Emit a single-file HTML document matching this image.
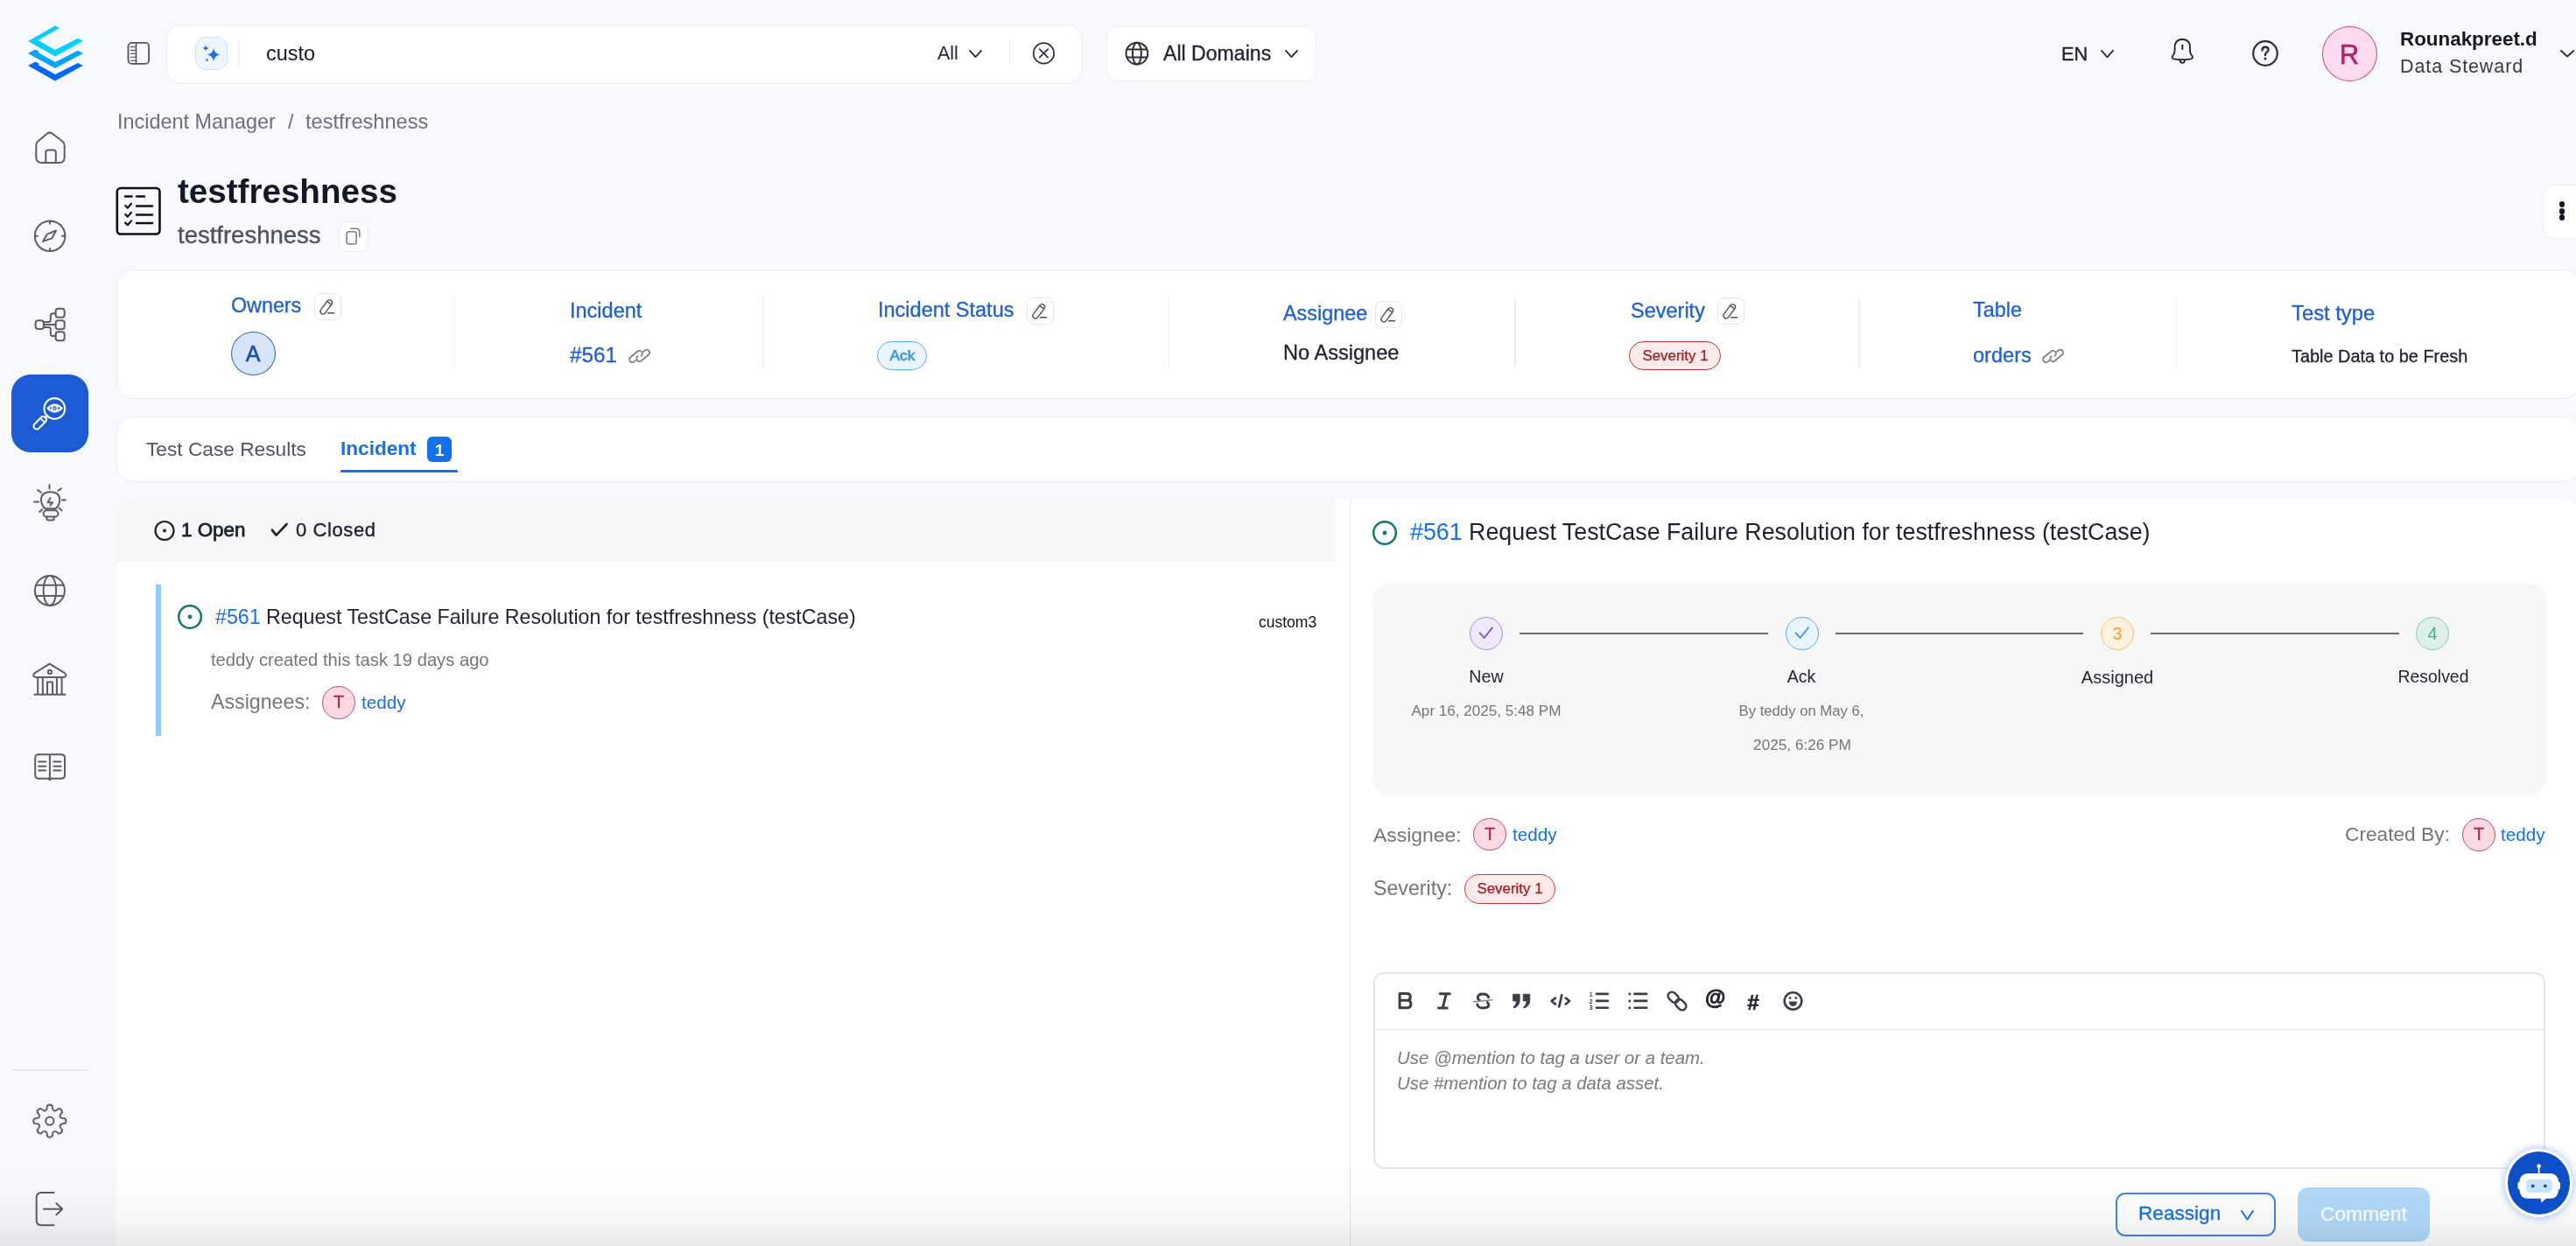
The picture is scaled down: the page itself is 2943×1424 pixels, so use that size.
<!DOCTYPE html>
<html><head><meta charset="utf-8"><style>
html,body{margin:0;padding:0;}
body{width:2943px;height:1424px;overflow:hidden;position:relative;background:#f8f9fd;font-family:"Liberation Sans",sans-serif;}
.a{position:absolute;}
.t{position:absolute;white-space:nowrap;line-height:1;will-change:transform;}
svg.a{overflow:visible;}
</style></head><body>
<svg class="a" style="left:32.00px;top:29.00px;" width="64" height="64" viewBox="0 0 64 64" fill="none"><path d="M31 0.4 L36 3 L11.5 17 L31 28 L57 14.75 L62.75 18 L31 35.4 L0 18 Z" fill="#00d2fb"/><path d="M0 32 L8.5 27.5 L13 30 L11.5 31 L31 42 L57 28.75 L62.75 32 L31 49 Z" fill="#00a4fb"/><path d="M0 46 L8.5 41.5 L13 44 L11.5 45 L31 56 L57 43 L62.75 46 L31 63.5 Z" fill="#0068fb"/></svg>
<div class="a" style="left:12.80px;top:428.00px;width:88.20px;height:89.00px;background:#1b5bd4;border-radius:22px;"></div>
<svg class="a" style="left:0;top:0" width="133" height="1424" viewBox="0 0 133 1424" fill="none"><path d="M41.3 166 Q41.3 163.2 43.4 161.5 L53.8 152.8 Q56.9 150.4 60 152.8 L71.6 161.8 Q73.7 163.6 73.7 166.5 V179.6 Q73.7 186.1 67.2 186.1 H47.8 Q41.3 186.1 41.3 179.6 Z" stroke="#585e6a" stroke-width="2.0" stroke-linecap="round" stroke-linejoin="round"/><path d="M52.3 186.1 V174.1 Q52.3 171.6 54.8 171.6 H61.3 Q63.8 171.6 63.8 174.1 V186.1" stroke="#585e6a" stroke-width="2.0" stroke-linecap="round" stroke-linejoin="round"/><circle cx="57.1" cy="269.8" r="17.3" stroke="#585e6a" stroke-width="2.0" stroke-linecap="round" stroke-linejoin="round"/><path d="M56.9 253.2 V255.8 M56.9 284 V286.7 M40.2 269.7 H42.8 M71 269.8 H73.7" stroke="#585e6a" stroke-width="2.0" stroke-linecap="round" stroke-linejoin="round"/><path d="M49 275.9 L53.8 267.7 L64 263.5 L59.4 272.4 Z" stroke="#585e6a" stroke-width="2.0" stroke-linecap="round" stroke-linejoin="round"/><rect x="40.6" y="366.2" width="9.3" height="9.7" rx="3" stroke="#585e6a" stroke-width="2.0" stroke-linecap="round" stroke-linejoin="round"/><rect x="63.6" y="352.7" width="10.1" height="10.1" rx="3" stroke="#585e6a" stroke-width="2.0" stroke-linecap="round" stroke-linejoin="round"/><rect x="63.6" y="366.2" width="10.1" height="10.1" rx="3" stroke="#585e6a" stroke-width="2.0" stroke-linecap="round" stroke-linejoin="round"/><rect x="63.6" y="379.2" width="10.1" height="10.1" rx="3" stroke="#585e6a" stroke-width="2.0" stroke-linecap="round" stroke-linejoin="round"/><path d="M49.9 371 H63.6 M49.9 368 H55.5 Q57.8 368 57.8 365.5 V360.7 Q57.8 358.2 60.3 358.2 H63.6 M49.9 373.9 H55.5 Q57.8 373.9 57.8 376.4 V381.4 Q57.8 383.9 60.3 383.9 H63.6" stroke="#585e6a" stroke-width="2.0" stroke-linecap="round" stroke-linejoin="round"/><path d="M56.5 554.2 V558.6 M43.2 560.1 L46.8 562.8 M69.9 558.4 L66.3 560.8 M39.3 573.4 H44.1 M71 571.6 H74.8 M45 585 L48.3 582.4 M67.5 580.4 L70.4 583.5" stroke="#585e6a" stroke-width="2.0" stroke-linecap="round" stroke-linejoin="round"/><path d="M51.5 581.3 Q47 577 47 571.3 Q47 562.3 57.6 562.3 Q68.2 562.3 68.2 571.3 Q68.2 577 63.7 581.3 Z" stroke="#585e6a" stroke-width="2.0" stroke-linecap="round" stroke-linejoin="round"/><rect x="49.6" y="583.3" width="16.8" height="7.3" rx="3.6" stroke="#585e6a" stroke-width="2.0" stroke-linecap="round" stroke-linejoin="round"/><path d="M53.4 590.6 V592.4 Q53.4 594.4 55.4 594.4 H59.8 Q61.8 594.4 61.8 592.4 V590.6" stroke="#585e6a" stroke-width="2.0" stroke-linecap="round" stroke-linejoin="round"/><path d="M57.4 569.2 L54.5 574.3 H60 L57.4 577.6" stroke="#585e6a" stroke-width="2.0" stroke-linecap="round" stroke-linejoin="round" stroke-width="1.8"/><circle cx="56.9" cy="674.9" r="17" stroke="#585e6a" stroke-width="2.0" stroke-linecap="round" stroke-linejoin="round"/><ellipse cx="56.9" cy="674.9" rx="7.3" ry="17" stroke="#585e6a" stroke-width="2.0" stroke-linecap="round" stroke-linejoin="round"/><path d="M41 668.7 H72.8 M41 681.1 H72.8" stroke="#585e6a" stroke-width="2.0" stroke-linecap="round" stroke-linejoin="round"/><path d="M56.7 758.6 L39.7 769.2 Q37.5 770.8 38.6 772.8 Q39.6 774.1 41.6 774.1 H72 Q74 774.1 75 772.8 Q76 770.8 73.8 769.2 Z" stroke="#585e6a" stroke-width="2.0" stroke-linecap="round" stroke-linejoin="round"/><circle cx="56.9" cy="767.9" r="2.1" stroke="#585e6a" stroke-width="2.0" stroke-linecap="round" stroke-linejoin="round" stroke-width="1.7"/><path d="M43.2 774.1 V793.5 M48.8 774.1 V793.5 M64.9 774.1 V793.5 M70.6 774.1 V793.5 M54 793.5 V779.6 H60 V793.5 M39.3 793.7 H74.6" stroke="#585e6a" stroke-width="2.0" stroke-linecap="round" stroke-linejoin="round"/><path d="M56.9 863.5 Q56.9 862.3 55 862.3 H44.2 Q40.2 862.3 40.2 866.3 V885.8 Q40.2 889.8 44.2 889.8 H56.9 M56.9 863.5 Q56.9 862.3 58.8 862.3 H70 Q74 862.3 74 866.3 V885.8 Q74 889.8 70 889.8 H56.9 M56.9 863.5 V890" stroke="#585e6a" stroke-width="2.0" stroke-linecap="round" stroke-linejoin="round"/><circle cx="56.9" cy="890.3" r="2" fill="#585e6a"/><path d="M44.1 870.6 H52.3 M44.1 875.7 H52.3 M44.1 880.6 H52.3 M61.3 870.6 H69.5 M61.3 875.7 H69.5 M61.3 880.6 H69.5" stroke="#585e6a" stroke-width="2.0" stroke-linecap="round" stroke-linejoin="round"/><path d="M51.83 1269.19 Q53.74 1269.08 53.91 1263.84 Q56.80 1261.40 59.69 1263.84 Q59.86 1269.08 61.77 1269.19 Q63.21 1270.47 67.03 1266.88 Q70.80 1267.20 71.12 1270.97 Q67.53 1274.79 68.81 1276.23 Q68.92 1278.14 74.16 1278.31 Q76.60 1281.20 74.16 1284.09 Q68.92 1284.26 68.81 1286.17 Q67.53 1287.61 71.12 1291.43 Q70.80 1295.20 67.03 1295.52 Q63.21 1291.93 61.77 1293.21 Q59.86 1293.32 59.69 1298.56 Q56.80 1301.00 53.91 1298.56 Q53.74 1293.32 51.83 1293.21 Q50.39 1291.93 46.57 1295.52 Q42.80 1295.20 42.48 1291.43 Q46.07 1287.61 44.79 1286.17 Q44.68 1284.26 39.44 1284.09 Q37.00 1281.20 39.44 1278.31 Q44.68 1278.14 44.79 1276.23 Q46.07 1274.79 42.48 1270.97 Q42.80 1267.20 46.57 1266.88 Q50.39 1270.47 51.83 1269.19 Z" stroke="#585e6a" stroke-width="2.0" stroke-linecap="round" stroke-linejoin="round"/><circle cx="56.8" cy="1281.2" r="4.6" stroke="#585e6a" stroke-width="2.0" stroke-linecap="round" stroke-linejoin="round"/><path d="M61.6 1363 H47.5 Q41.7 1363 41.7 1368.8 V1394.5 Q41.7 1400.3 47.5 1400.3 H61.6" stroke="#585e6a" stroke-width="2.0" stroke-linecap="round" stroke-linejoin="round"/><path d="M50 1381.7 H71.2 M64.4 1375.2 L71.2 1381.7 L64.4 1388.2" stroke="#585e6a" stroke-width="2.0" stroke-linecap="round" stroke-linejoin="round"/><circle cx="62.3" cy="466.9" r="11.8" stroke="#fff" stroke-width="2.1" stroke-linecap="round" stroke-linejoin="round"/><path d="M54.6 466.6 Q62.4 458.6 70.8 466.6 Q62.4 474.6 54.6 466.6 Z" stroke="#fff" stroke-width="2.1" stroke-linecap="round" stroke-linejoin="round"/><circle cx="62.5" cy="466.6" r="3.1" stroke="#fff" stroke-width="1.7"/><circle cx="62.5" cy="466.6" r="1" fill="#fff"/><path d="M51.5 477.6 L54.2 474.9" stroke="#fff" stroke-width="2.1" stroke-linecap="round" stroke-linejoin="round"/><g transform="rotate(-45 45.75 483.25)"><rect x="36.9" y="479.75" width="17.7" height="7" rx="3.5" stroke="#fff" stroke-width="2"/><path d="M49.8 479.75 V486.75" stroke="#fff" stroke-width="1.8"/></g></svg>
<div class="a" style="left:12.50px;top:1222.00px;width:88.50px;height:1.50px;background:#e8e9ee;"></div>
<svg class="a" style="left:139.00px;top:41.00px" width="39.00" height="40.00" viewBox="139.00 41.00 39.00 40.00" fill="none"><rect x="146.5" y="48.9" width="23.6" height="24" rx="4.2" stroke="#50565f" stroke-width="1.8"/><path d="M155.5 48.9 V72.9" stroke="#50565f" stroke-width="1.6"/><path d="M149.3 53.5 H154.8 M149.3 57.5 H154.8 M149.3 61.4 H154.8 M149.3 65.4 H154.8 M149.3 69.3 H154.8" stroke="#5d636d" stroke-width="1.3" stroke-linecap="round"/></svg>
<div class="a" style="left:190.00px;top:28.00px;width:1047.00px;height:67.50px;background:#fff;border:1.5px solid #e9ebf2;border-radius:18px;box-sizing:border-box;"></div>
<div class="a" style="left:222.70px;top:42.00px;width:37.30px;height:38.00px;background:#eef6ff;border:1.5px solid #c6e4fb;border-radius:12px;box-sizing:border-box;"></div>
<svg class="a" style="left:228.00px;top:49.00px;" width="26" height="26" viewBox="0 0 26 26" fill="none"><path d="M16 6 Q17 12.5 23.5 13.5 Q17 14.5 16 21 Q15 14.5 8.5 13.5 Q15 12.5 16 6 Z" fill="#1f6fe8"/><path d="M7 2.5 Q7.5 5.5 10.5 6 Q7.5 6.5 7 9.5 Q6.5 6.5 3.5 6 Q6.5 5.5 7 2.5 Z" fill="#1f6fe8"/><path d="M8.5 17.5 Q8.8 19.2 10.5 19.5 Q8.8 19.8 8.5 21.5 Q8.2 19.8 6.5 19.5 Q8.2 19.2 8.5 17.5 Z" fill="#1f6fe8"/></svg>
<div class="a" style="left:272.00px;top:44.00px;width:1.30px;height:32.00px;background:#e9ebf0;"></div>
<div class="t " style="left:304.40px;top:50.19px;font-size:23.4px;color:#101828;font-weight:400;">custo</div>
<div class="t " style="left:1070.75px;top:50.63px;font-size:21.4px;color:#1d2433;font-weight:400;">All</div>
<svg class="a" style="left:1101.00px;top:51.00px" width="27.00" height="21.00" viewBox="1101.00 51.00 27.00 21.00" fill="none"><path d="M1107.95 57.95 L1114.50 65.05 L1121.05 57.95" stroke="#2b303b" stroke-width="1.9" stroke-linecap="round" stroke-linejoin="round"/></svg>
<div class="a" style="left:1153.20px;top:44.50px;width:1.20px;height:30.50px;background:#e9ebf0;"></div>
<svg class="a" style="left:1173.00px;top:41.00px" width="39.00" height="40.00" viewBox="1173.00 41.00 39.00 40.00" fill="none"><circle cx="1192.4" cy="60.9" r="11.7" stroke="#2b303b" stroke-width="1.7"/><path d="M1187.6 56.1 L1197.2 65.7 M1197.2 56.1 L1187.6 65.7" stroke="#2b303b" stroke-width="1.7" stroke-linecap="round"/></svg>
<div class="a" style="left:1263.75px;top:30.00px;width:240.50px;height:62.50px;background:#fff;border:1.5px solid #eceef4;border-radius:14px;box-sizing:border-box;"></div>
<svg class="a" style="left:1279.00px;top:41.00px" width="40.00" height="40.00" viewBox="1279.00 41.00 40.00 40.00" fill="none"><circle cx="1298.9" cy="61.1" r="12.4" stroke="#2b303b" stroke-width="2"/><ellipse cx="1298.9" cy="61.1" rx="5" ry="12.4" stroke="#2b303b" stroke-width="2"/><path d="M1287.4 56.6 H1310.4 M1287.4 65.6 H1310.4" stroke="#2b303b" stroke-width="2"/></svg>
<div class="t " style="left:1328.75px;top:49.95px;font-size:23.1px;color:#1d2433;font-weight:400;-webkit-text-stroke:0.35px #1d2433;">All Domains</div>
<svg class="a" style="left:1461.50px;top:51.00px" width="27.00" height="21.00" viewBox="1461.50 51.00 27.00 21.00" fill="none"><path d="M1468.45 57.95 L1475.00 65.05 L1481.55 57.95" stroke="#2b303b" stroke-width="1.9" stroke-linecap="round" stroke-linejoin="round"/></svg>
<div class="t " style="left:2355.00px;top:51.05px;font-size:21.8px;color:#1d2433;font-weight:400;-webkit-text-stroke:0.35px #1d2433;">EN</div>
<svg class="a" style="left:2393.50px;top:51.00px" width="27.00" height="21.25" viewBox="2393.50 51.00 27.00 21.25" fill="none"><path d="M2400.45 57.95 L2407.00 65.30 L2413.55 57.95" stroke="#2b303b" stroke-width="1.9" stroke-linecap="round" stroke-linejoin="round"/></svg>
<svg class="a" style="left:2473.00px;top:37.00px" width="41.00" height="43.00" viewBox="2473.00 37.00 41.00 43.00" fill="none"><path d="M2493.3 45 Q2501.8 45 2502 54 V58.5 Q2502.2 61.5 2504.5 64 Q2506 66.5 2503 67.3 Q2493.3 69 2483.6 67.3 Q2480.6 66.5 2482.1 64 Q2484.4 61.5 2484.6 58.5 V54 Q2484.8 45 2493.3 45 Z" stroke="#1f242c" stroke-width="1.8" stroke-linejoin="round"/><path d="M2493.3 51.8 V56" stroke="#1f242c" stroke-width="2" stroke-linecap="round"/><path d="M2490.4 68.4 Q2490.8 71.8 2493.3 71.8 Q2495.8 71.8 2496.2 68.4" stroke="#1f242c" stroke-width="1.8"/></svg>
<svg class="a" style="left:2572.00px;top:45.00px;" width="32" height="32" viewBox="0 0 32 32" fill="none"><circle cx="16" cy="16" r="13.8" stroke="#2b303b" stroke-width="2.2"/><path d="M12.5 12.5 Q12.5 8.8 16 8.8 Q19.5 8.8 19.5 12 Q19.5 14 17.5 15 Q16 15.8 16 17.5 V18" stroke="#2b303b" stroke-width="2.4" stroke-linecap="round"/><circle cx="16" cy="22" r="1.5" fill="#2b303b"/></svg>
<div class="a" style="left:2652.75px;top:29.50px;width:63.25px;height:63.00px;background:#fddcef;border:1.5px solid #cc4a86;border-radius:50%;box-sizing:border-box;"></div>
<div class="t " style="left:2184.40px;width:1000px;text-align:center;top:46.76px;font-size:31px;color:#b8206e;font-weight:400;-webkit-text-stroke:0.6px #b8206e;">R</div>
<div class="t " style="left:2742.00px;top:33.54px;font-size:22.4px;color:#101828;font-weight:700;">Rounakpreet.d</div>
<div class="t " style="left:2742.00px;top:65.55px;font-size:21.5px;color:#333946;font-weight:400;letter-spacing:0.9px;">Data Steward</div>
<svg class="a" style="left:2919.25px;top:51.00px" width="28.25" height="20.50" viewBox="2919.25 51.00 28.25 20.50" fill="none"><path d="M2926.20 57.95 L2933.38 64.55 L2940.55 57.95" stroke="#2b303b" stroke-width="1.9" stroke-linecap="round" stroke-linejoin="round"/></svg>
<div class="t " style="left:134.00px;top:127.69px;font-size:23.4px;color:#6e6d86;font-weight:400;">Incident Manager</div>
<div class="t " style="left:329.00px;top:127.69px;font-size:23.4px;color:#6e6d86;font-weight:400;">/</div>
<div class="t " style="left:349.40px;top:128.02px;font-size:23.6px;color:#6e6d86;font-weight:400;">testfreshness</div>
<svg class="a" style="left:125.00px;top:206.00px" width="67.00" height="71.00" viewBox="125.00 206.00 67.00 71.00" fill="none"><rect x="133.8" y="215.05" width="48.65" height="52.4" rx="4" stroke="#0d1117" stroke-width="2.6"/><path d="M143 224.5 H150.5 M156 224.5 H165 M156 235.5 H174 M156 245.5 H174 M156 255 H174" stroke="#0d1117" stroke-width="2.5" stroke-linecap="round"/><path d="M143.2 235 L145.8 237.6 L150 232.8 M143.2 245 L145.8 247.6 L150 242.8 M143.2 254.6 L145.8 257.2 L150 252.4" stroke="#0d1117" stroke-width="2.2" stroke-linecap="round" stroke-linejoin="round"/></svg>
<div class="t " style="left:202.50px;top:200.33px;font-size:38.6px;color:#111827;font-weight:700;">testfreshness</div>
<div class="t " style="left:202.50px;top:255.47px;font-size:27.5px;color:#4a5262;font-weight:400;-webkit-text-stroke:0.35px #4a5262;">testfreshness</div>
<div class="a" style="left:386.50px;top:253.00px;width:34.00px;height:34.50px;background:#fff;border:1.5px solid #e9ecf5;border-radius:10px;box-sizing:border-box;"></div>
<svg class="a" style="left:388.00px;top:253.00px" width="31.00" height="34.00" viewBox="388.00 253.00 31.00 34.00" fill="none"><rect x="396" y="264.8" width="11.2" height="14.2" rx="3" stroke="#7b808a" stroke-width="1.6"/><path d="M400.8 261.3 H406.3 Q410.8 261.3 410.8 265.8 V270.6" stroke="#7b808a" stroke-width="1.6" stroke-linecap="round"/></svg>
<div class="a" style="left:2904.50px;top:210.50px;width:85.50px;height:62.00px;background:#fff;border:1.5px solid #eceef4;border-radius:14px;box-sizing:border-box;"></div>
<div class="a" style="left:2923.50px;top:230.45px;width:6.60px;height:6.60px;background:#111827;border-radius:50%;"></div>
<div class="a" style="left:2923.50px;top:237.95px;width:6.60px;height:6.60px;background:#111827;border-radius:50%;"></div>
<div class="a" style="left:2923.50px;top:245.45px;width:6.60px;height:6.60px;background:#111827;border-radius:50%;"></div>
<div class="a" style="left:133.00px;top:308.00px;width:2815.00px;height:147.50px;background:#fff;border:1.5px solid #e8ebf3;border-radius:20px;box-sizing:border-box;"></div>
<div class="a" style="left:518.75px;top:341.00px;width:1.50px;height:78.50px;background:#eceef5;"></div>
<div class="a" style="left:871.25px;top:341.00px;width:1.50px;height:78.50px;background:#eceef5;"></div>
<div class="a" style="left:1334.75px;top:341.00px;width:1.50px;height:78.50px;background:#eceef5;"></div>
<div class="a" style="left:1730.25px;top:341.00px;width:1.50px;height:78.50px;background:#eceef5;"></div>
<div class="a" style="left:2123.00px;top:341.00px;width:1.50px;height:78.50px;background:#eceef5;"></div>
<div class="a" style="left:2485.75px;top:341.00px;width:1.50px;height:78.50px;background:#eceef5;"></div>
<div class="t " style="left:264.00px;top:337.78px;font-size:23.3px;color:#1c5fd6;font-weight:400;-webkit-text-stroke:0.3px #1c5fd6;">Owners</div>
<div class="a" style="left:359.00px;top:334.50px;width:31.00px;height:31.00px;background:#fff;border:1.5px solid #e4e6ea;border-radius:7px;box-sizing:border-box;"></div>
<svg class="a" style="left:359.00px;top:334.50px;" width="31" height="31" viewBox="0 0 31 31" fill="none"><g transform="rotate(-53 13.6 16)"><rect x="4.6" y="12.9" width="18.5" height="6.2" rx="3.1" stroke="#4b515c" stroke-width="1.35"/><path d="M19.6 12.9 V19.1" stroke="#4b515c" stroke-width="1.35"/></g><path d="M15.6 22.8 H22.6" stroke="#4b515c" stroke-width="1.6" stroke-linecap="round"/></svg>
<div class="a" style="left:263.75px;top:378.75px;width:50.75px;height:50.50px;background:#d6e5fc;border:1.5px solid #2f5fb8;border-radius:50%;box-sizing:border-box;"></div>
<div class="t " style="left:-210.90px;width:1000px;text-align:center;top:391.84px;font-size:25px;color:#1d4fa8;font-weight:400;-webkit-text-stroke:0.6px #1d4fa8;">A</div>
<div class="t " style="left:651.00px;top:343.86px;font-size:23.5px;color:#1c5fd6;font-weight:400;-webkit-text-stroke:0.3px #1c5fd6;">Incident</div>
<div class="t " style="left:651.00px;top:394.43px;font-size:24.3px;color:#1c5fd6;font-weight:400;-webkit-text-stroke:0.3px #1c5fd6;">#561</div>
<svg class="a" style="left:709.00px;top:388.00px" width="42.00" height="38.00" viewBox="709.00 388.00 42.00 38.00" fill="none"><g transform="rotate(-39.4 730.6 406.9)" stroke="#828282" stroke-width="1.8" stroke-linecap="round" fill="none"><path d="M724.00 408.00 H721.80 A3.3 3.3 0 0 1 721.80 401.40 H732.40 A3.3 3.3 0 0 1 732.40 408.00"/><path d="M737.20 405.80 H739.40 A3.3 3.3 0 0 1 739.40 412.40 H728.80 A3.3 3.3 0 0 1 728.80 405.80"/></g></svg>
<div class="t " style="left:1002.50px;top:343.11px;font-size:23.5px;color:#1c5fd6;font-weight:400;-webkit-text-stroke:0.3px #1c5fd6;">Incident Status</div>
<div class="a" style="left:1173.00px;top:340.00px;width:31.00px;height:31.00px;background:#fff;border:1.5px solid #e4e6ea;border-radius:7px;box-sizing:border-box;"></div>
<svg class="a" style="left:1173.00px;top:340.00px;" width="31" height="31" viewBox="0 0 31 31" fill="none"><g transform="rotate(-53 13.6 16)"><rect x="4.6" y="12.9" width="18.5" height="6.2" rx="3.1" stroke="#4b515c" stroke-width="1.35"/><path d="M19.6 12.9 V19.1" stroke="#4b515c" stroke-width="1.35"/></g><path d="M15.6 22.8 H22.6" stroke="#4b515c" stroke-width="1.6" stroke-linecap="round"/></svg>
<div class="a" style="left:1002.00px;top:390.00px;width:57.00px;height:33.00px;background:#eaf5ff;border:1.5px solid #5aaef2;border-radius:17px;box-sizing:border-box;"></div>
<div class="t " style="left:530.50px;width:1000px;text-align:center;top:398.27px;font-size:17.4px;color:#3a97ea;font-weight:400;-webkit-text-stroke:0.7px #3a97ea;">Ack</div>
<div class="t " style="left:1466.00px;top:347.19px;font-size:23.4px;color:#1c5fd6;font-weight:400;-webkit-text-stroke:0.3px #1c5fd6;">Assignee</div>
<div class="a" style="left:1570.50px;top:344.00px;width:31.00px;height:31.00px;background:#fff;border:1.5px solid #e4e6ea;border-radius:7px;box-sizing:border-box;"></div>
<svg class="a" style="left:1570.50px;top:344.00px;" width="31" height="31" viewBox="0 0 31 31" fill="none"><g transform="rotate(-53 13.6 16)"><rect x="4.6" y="12.9" width="18.5" height="6.2" rx="3.1" stroke="#4b515c" stroke-width="1.35"/><path d="M19.6 12.9 V19.1" stroke="#4b515c" stroke-width="1.35"/></g><path d="M15.6 22.8 H22.6" stroke="#4b515c" stroke-width="1.6" stroke-linecap="round"/></svg>
<div class="t " style="left:1466.00px;top:392.02px;font-size:23.6px;color:#1c2230;font-weight:400;-webkit-text-stroke:0.3px #1c2230;">No Assignee</div>
<div class="t " style="left:1862.50px;top:343.86px;font-size:23.5px;color:#1c5fd6;font-weight:400;-webkit-text-stroke:0.3px #1c5fd6;">Severity</div>
<div class="a" style="left:1962.00px;top:340.00px;width:31.00px;height:31.00px;background:#fff;border:1.5px solid #e4e6ea;border-radius:7px;box-sizing:border-box;"></div>
<svg class="a" style="left:1962.00px;top:340.00px;" width="31" height="31" viewBox="0 0 31 31" fill="none"><g transform="rotate(-53 13.6 16)"><rect x="4.6" y="12.9" width="18.5" height="6.2" rx="3.1" stroke="#4b515c" stroke-width="1.35"/><path d="M19.6 12.9 V19.1" stroke="#4b515c" stroke-width="1.35"/></g><path d="M15.6 22.8 H22.6" stroke="#4b515c" stroke-width="1.6" stroke-linecap="round"/></svg>
<div class="a" style="left:1861.00px;top:390.00px;width:105.00px;height:33.00px;background:#fdeaea;border:1.5px solid #b93434;border-radius:17px;box-sizing:border-box;"></div>
<div class="t " style="left:1413.50px;width:1000px;text-align:center;top:398.69px;font-size:16.9px;color:#a51b1b;font-weight:400;-webkit-text-stroke:0.25px #a51b1b;">Severity 1</div>
<div class="t " style="left:2254.00px;top:343.19px;font-size:23.4px;color:#1c5fd6;font-weight:400;-webkit-text-stroke:0.3px #1c5fd6;">Table</div>
<div class="t " style="left:2254.00px;top:394.52px;font-size:23.6px;color:#1c5fd6;font-weight:400;-webkit-text-stroke:0.3px #1c5fd6;">orders</div>
<svg class="a" style="left:2324.00px;top:388.00px" width="42.00" height="38.00" viewBox="2324.00 388.00 42.00 38.00" fill="none"><g transform="rotate(-39.4 2345.6 406.9)" stroke="#828282" stroke-width="1.8" stroke-linecap="round" fill="none"><path d="M2339.00 408.00 H2336.80 A3.3 3.3 0 0 1 2336.80 401.40 H2347.40 A3.3 3.3 0 0 1 2347.40 408.00"/><path d="M2352.20 405.80 H2354.40 A3.3 3.3 0 0 1 2354.40 412.40 H2343.80 A3.3 3.3 0 0 1 2343.80 405.80"/></g></svg>
<div class="t " style="left:2617.75px;top:345.85px;font-size:23.8px;color:#1c5fd6;font-weight:400;-webkit-text-stroke:0.3px #1c5fd6;">Test type</div>
<div class="t " style="left:2617.75px;top:398.15px;font-size:19.9px;color:#1c2230;font-weight:400;-webkit-text-stroke:0.3px #1c2230;">Table Data to be Fresh</div>
<div class="a" style="left:133.00px;top:475.50px;width:2815.00px;height:75.00px;background:#fff;border:1.5px solid #eceef5;border-radius:20px;box-sizing:border-box;"></div>
<div class="t " style="left:167.00px;top:502.03px;font-size:22.7px;color:#4f5663;font-weight:400;">Test Case Results</div>
<div class="t " style="left:389.00px;top:501.87px;font-size:22.6px;color:#1570ef;font-weight:700;">Incident</div>
<div class="a" style="left:488.00px;top:498.75px;width:28.00px;height:28.75px;background:#1570ef;border-radius:6px;"></div>
<div class="t " style="left:2.00px;width:1000px;text-align:center;top:504.92px;font-size:19px;color:#fff;font-weight:700;">1</div>
<div class="a" style="left:389.00px;top:537.00px;width:133.50px;height:3.00px;background:#1570ef;border-radius:1px;"></div>
<div class="a" style="left:133.00px;top:569.50px;width:1409.00px;height:854.50px;background:#fff;border-top-left-radius:20px;"></div>
<div class="a" style="left:133.00px;top:569.50px;width:1393.00px;height:72.50px;background:#f7f7f7;border-top-left-radius:20px;"></div>
<svg class="a" style="left:175.00px;top:594.00px;" width="26" height="26" viewBox="0 0 26 26" fill="none"><circle cx="13" cy="12.5" r="10.5" stroke="#1c2230" stroke-width="2.2"/><circle cx="13" cy="12.5" r="2" fill="#1c2230"/></svg>
<div class="t " style="left:207.00px;top:594.79px;font-size:22.4px;color:#1c2230;font-weight:400;-webkit-text-stroke:0.8px #1c2230;">1 Open</div>
<svg class="a" style="left:301.00px;top:590.00px" width="36.00" height="32.00" viewBox="301.00 590.00 36.00 32.00" fill="none"><path d="M310.8 605.6 L315.6 611.6 L327.6 599" stroke="#1c2230" stroke-width="2.6" stroke-linecap="round" stroke-linejoin="round"/></svg>
<div class="t " style="left:338.00px;top:595.13px;font-size:22px;color:#1c2230;font-weight:400;letter-spacing:0.6px;-webkit-text-stroke:0.35px #1c2230;">0 Closed</div>
<div class="a" style="left:177.50px;top:667.50px;width:6.00px;height:173.00px;background:#8ecbff;"></div>
<svg class="a" style="left:200.50px;top:689.00px;" width="32" height="32" viewBox="0 0 32 32" fill="none"><circle cx="16" cy="16" r="12.8" stroke="#0f7a6d" stroke-width="2.5"/><circle cx="16" cy="16" r="2.4" fill="#0f7a6d"/></svg>
<div class="t " style="left:245.50px;top:693.61px;font-size:23.2px;color:#1c2230;font-weight:400;"><span style="color:#1570ef">#561</span> Request TestCase Failure Resolution for testfreshness (testCase)</div>
<div class="t " style="left:1438.00px;top:703.19px;font-size:17.5px;color:#111;font-weight:400;">custom3</div>
<div class="t " style="left:241.00px;top:744.15px;font-size:20.2px;color:#757575;font-weight:400;">teddy created this task 19 days ago</div>
<div class="t " style="left:241.00px;top:790.86px;font-size:23.2px;color:#757575;font-weight:400;">Assignees:</div>
<div class="a" style="left:368.00px;top:783.75px;width:37.75px;height:37.75px;background:#fdd9e1;border:1.5px solid #c9486c;border-radius:50%;box-sizing:border-box;"></div>
<div class="t " style="left:-113.12px;width:1000px;text-align:center;top:792.30px;font-size:20px;color:#b1214f;font-weight:400;-webkit-text-stroke:0.3px #b1214f;">T</div>
<div class="t " style="left:412.50px;top:792.98px;font-size:20.7px;color:#1570ef;font-weight:400;">teddy</div>
<div class="a" style="left:1541.80px;top:569.50px;width:1.30px;height:854.50px;background:#e9eaf4;"></div>
<div class="a" style="left:1543.50px;top:569.50px;width:1404.50px;height:854.50px;background:#fff;border-top-right-radius:20px;"></div>
<svg class="a" style="left:1566.30px;top:592.80px;" width="32" height="32" viewBox="0 0 32 32" fill="none"><circle cx="16" cy="16" r="12.8" stroke="#0f7a6d" stroke-width="2.5"/><circle cx="16" cy="16" r="2.4" fill="#0f7a6d"/></svg>
<div class="t " style="left:1610.50px;top:594.81px;font-size:26.8px;color:#1c2230;font-weight:400;"><span style="color:#1570ef">#561</span> Request TestCase Failure Resolution for testfreshness (testCase)</div>
<div class="a" style="left:1568.00px;top:667.00px;width:1341.00px;height:241.75px;background:#f7f7f7;border-radius:20px;"></div>
<div class="a" style="left:1736.00px;top:722.75px;width:284.00px;height:2.00px;background:#6d6d6d;"></div>
<div class="a" style="left:2097.00px;top:722.75px;width:283.00px;height:2.00px;background:#6d6d6d;"></div>
<div class="a" style="left:2457.00px;top:722.75px;width:284.00px;height:2.00px;background:#6d6d6d;"></div>
<div class="a" style="left:1678.75px;top:704.75px;width:38.00px;height:38.00px;background:#efe9fd;border:1.5px solid #a88cf0;border-radius:50%;box-sizing:border-box;"></div>

<svg class="a" style="left:1682.00px;top:709.00px" width="31.00" height="28.00" viewBox="1682.00 709.00 31.00 28.00" fill="none"><path d="M1690.6 723.4 L1695.6 729 L1704.9 717.4" stroke="#7550e0" stroke-width="1.8" stroke-linecap="round" stroke-linejoin="round"/></svg>
<div class="a" style="left:2039.75px;top:704.75px;width:38.00px;height:38.00px;background:#eaf4ff;border:1.5px solid #5aaef5;border-radius:50%;box-sizing:border-box;"></div>

<svg class="a" style="left:2043.00px;top:709.00px" width="31.00" height="28.00" viewBox="2043.00 709.00 31.00 28.00" fill="none"><path d="M2051.6 723.4 L2056.6 729 L2065.9 717.4" stroke="#3597f0" stroke-width="1.8" stroke-linecap="round" stroke-linejoin="round"/></svg>
<div class="a" style="left:2399.50px;top:704.75px;width:38.00px;height:38.00px;background:#fdf2e2;border:1.5px solid #f8c45c;border-radius:50%;box-sizing:border-box;"></div>

<div class="t " style="left:1918.50px;width:1000px;text-align:center;top:714.07px;font-size:20px;color:#f5a623;font-weight:400;">3</div>
<div class="a" style="left:2760.00px;top:704.75px;width:38.00px;height:38.00px;background:#dcf0e7;border:1.5px solid #7fd1ae;border-radius:50%;box-sizing:border-box;"></div>

<div class="t " style="left:2279.00px;width:1000px;text-align:center;top:714.07px;font-size:20px;color:#3db58a;font-weight:400;">4</div>
<div class="t " style="left:1197.75px;width:1000px;text-align:center;top:764.07px;font-size:19.7px;color:#1f2430;font-weight:400;">New</div>
<div class="t " style="left:1558.25px;width:1000px;text-align:center;top:764.24px;font-size:19.5px;color:#1f2430;font-weight:400;">Ack</div>
<div class="t " style="left:1918.75px;width:1000px;text-align:center;top:763.82px;font-size:20.0px;color:#1f2430;font-weight:400;">Assigned</div>
<div class="t " style="left:2279.50px;width:1000px;text-align:center;top:764.33px;font-size:19.4px;color:#1f2430;font-weight:400;">Resolved</div>
<div class="t " style="left:1197.90px;width:1000px;text-align:center;top:804.27px;font-size:17.1px;color:#757575;font-weight:400;">Apr 16, 2025, 5:48 PM</div>
<div class="t " style="left:1558.25px;width:1000px;text-align:center;top:804.61px;font-size:16.7px;color:#757575;font-weight:400;">By teddy on May 6,</div>
<div class="t " style="left:1558.50px;width:1000px;text-align:center;top:843.44px;font-size:17.2px;color:#757575;font-weight:400;">2025, 6:26 PM</div>
<div class="t " style="left:1569.25px;top:942.62px;font-size:22.9px;color:#757575;font-weight:400;">Assignee:</div>
<div class="a" style="left:1683.25px;top:934.50px;width:37.50px;height:37.50px;background:#fdd9e1;border:1.5px solid #c9486c;border-radius:50%;box-sizing:border-box;"></div>
<div class="t " style="left:1202.00px;width:1000px;text-align:center;top:942.92px;font-size:20px;color:#b1214f;font-weight:400;-webkit-text-stroke:0.3px #b1214f;">T</div>
<div class="t " style="left:1728.00px;top:944.48px;font-size:20.7px;color:#1570ef;font-weight:400;">teddy</div>
<div class="t " style="left:2679.00px;top:942.48px;font-size:22.7px;color:#757575;font-weight:400;">Created By:</div>
<div class="a" style="left:2813.00px;top:934.50px;width:38.00px;height:38.00px;background:#fdd9e1;border:1.5px solid #c9486c;border-radius:50%;box-sizing:border-box;"></div>
<div class="t " style="left:2332.00px;width:1000px;text-align:center;top:943.17px;font-size:20px;color:#b1214f;font-weight:400;-webkit-text-stroke:0.3px #b1214f;">T</div>
<div class="t " style="left:2857.40px;top:944.18px;font-size:20.7px;color:#1570ef;font-weight:400;">teddy</div>
<div class="t " style="left:1569.00px;top:1004.11px;font-size:23.2px;color:#757575;font-weight:400;">Severity:</div>
<div class="a" style="left:1672.50px;top:999.25px;width:104.25px;height:33.25px;background:#fdeaea;border:1.5px solid #c33b3b;border-radius:17px;box-sizing:border-box;"></div>
<div class="t " style="left:1224.60px;width:1000px;text-align:center;top:1007.69px;font-size:16.9px;color:#a51b1b;font-weight:400;-webkit-text-stroke:0.25px #a51b1b;">Severity 1</div>
<div class="a" style="left:1568.75px;top:1111.25px;width:1339.00px;height:224.25px;background:#fff;border:2px solid #e3e6ec;border-radius:12px;box-sizing:border-box;"></div>
<div class="a" style="left:1570.75px;top:1175.50px;width:1335.00px;height:1.50px;background:#e3e6ec;"></div>
<svg class="a" style="left:1591.00px;top:1128.00px" width="29.00" height="32.00" viewBox="1591.00 1128.00 29.00 32.00" fill="none"><path d="M1599.1 1135.6 H1607.4 Q1611.3 1135.6 1611.3 1139.5 Q1611.3 1143.3 1607.4 1143.3 H1599.1 Z M1599.1 1143.3 H1608 Q1611.9 1143.3 1611.9 1147.6 Q1611.9 1151.8 1608 1151.8 H1599.1 Z" stroke="#3a3f47" stroke-width="3" stroke-linejoin="round"/></svg>
<svg class="a" style="left:1636.00px;top:1128.00px" width="28.00" height="32.00" viewBox="1636.00 1128.00 28.00 32.00" fill="none"><path d="M1645.3 1135.8 H1656.3 M1643.5 1152 H1653.2 M1652.3 1135.8 L1648.2 1152" stroke="#3a3f47" stroke-width="3" stroke-linecap="round"/></svg>
<svg class="a" style="left:1677.00px;top:1128.00px" width="35.00" height="32.00" viewBox="1677.00 1128.00 35.00 32.00" fill="none"><path d="M1700.6 1139.8 Q1699.5 1136 1694.3 1136 Q1688.3 1136 1688.3 1140.2 Q1688.3 1142.3 1690.5 1143.3 M1699.3 1145.6 Q1700.8 1146.8 1700.8 1148.6 Q1700.8 1152 1694.3 1152 Q1688.8 1152 1687.8 1148" stroke="#3a3f47" stroke-width="2.9" stroke-linecap="round"/><path d="M1683.6 1144.9 L1704.8 1142.7" stroke="#8a8d92" stroke-width="1.6" stroke-linecap="round"/></svg>
<svg class="a" style="left:1722.00px;top:1129.00px" width="33.00" height="30.00" viewBox="1722.00 1129.00 33.00 30.00" fill="none"><path d="M1728.6 1136.2 H1736.2 V1143 Q1736.2 1149.5 1730.2 1151.9 Q1729.1 1152.3 1729 1151.1 Q1732.5 1148.3 1732.6 1144 H1728.6 Z M1740.2 1136.2 H1747.8 V1143 Q1747.8 1149.5 1741.8 1151.9 Q1740.7 1152.3 1740.6 1151.1 Q1744.1 1148.3 1744.2 1144 H1740.2 Z" fill="#3a3f47" stroke="#3a3f47" stroke-width="0.8" stroke-linejoin="round"/></svg>
<svg class="a" style="left:1765.00px;top:1130.00px" width="35.00" height="28.00" viewBox="1765.00 1130.00 35.00 28.00" fill="none"><path d="M1776.9 1140.6 L1772.6 1144 L1776.9 1147.6 M1788.9 1140.6 L1793 1144 L1788.9 1147.6 M1784.3 1137.3 L1781.2 1150.5" stroke="#3a3f47" stroke-width="2.7" stroke-linecap="round" stroke-linejoin="round"/></svg>
<svg class="a" style="left:1809.00px;top:1126.00px" width="36.00" height="36.00" viewBox="1809.00 1126.00 36.00 36.00" fill="none"><path d="M1824 1135.9 H1836.8 M1824 1143.9 H1836.8 M1824 1151.7 H1836.8" stroke="#3a3f47" stroke-width="2.6" stroke-linecap="round"/><text x="1815.6" y="1138.6" font-size="7" font-weight="700" fill="#3a3f47" font-family="Liberation Sans">1</text><text x="1815.6" y="1146.6" font-size="7" font-weight="700" fill="#3a3f47" font-family="Liberation Sans">2</text><text x="1815.6" y="1154.4" font-size="7" font-weight="700" fill="#3a3f47" font-family="Liberation Sans">3</text></svg>
<svg class="a" style="left:1854.00px;top:1126.00px" width="35.00" height="36.00" viewBox="1854.00 1126.00 35.00 36.00" fill="none"><path d="M1867.5 1135.9 H1881.2 M1867.5 1143.9 H1881.2 M1867.5 1151.7 H1881.2" stroke="#3a3f47" stroke-width="2.6" stroke-linecap="round"/><circle cx="1861.8" cy="1135.9" r="1.5" fill="#3a3f47"/><circle cx="1861.8" cy="1143.9" r="1.5" fill="#3a3f47"/><circle cx="1861.8" cy="1151.7" r="1.5" fill="#3a3f47"/></svg>
<svg class="a" style="left:1898.00px;top:1126.00px" width="36.00" height="36.00" viewBox="1898.00 1126.00 36.00 36.00" fill="none"><g transform="rotate(45 1916 1144)"><rect x="1903.2" y="1139.5" width="13.6" height="9" rx="4.5" stroke="#3a3f47" stroke-width="2.5"/><rect x="1915.2" y="1139.5" width="13.6" height="9" rx="4.5" stroke="#3a3f47" stroke-width="2.5"/></g></svg>
<div class="t " style="left:1948.00px;top:1127.68px;font-size:24px;color:#1f242c;font-weight:700;-webkit-text-stroke:0.9px #1f242c;">@</div>
<div class="t " style="left:1995.50px;top:1133.68px;font-size:24px;color:#1f242c;font-weight:700;font-style:italic;-webkit-text-stroke:0.6px #1f242c;">#</div>
<svg class="a" style="left:2031.00px;top:1127.00px" width="35.00" height="34.00" viewBox="2031.00 1127.00 35.00 34.00" fill="none"><circle cx="2048.5" cy="1144" r="9.8" stroke="#3a3f47" stroke-width="2.6"/><circle cx="2045.1" cy="1140.6" r="1.4" fill="#3a3f47"/><circle cx="2051.9" cy="1140.6" r="1.4" fill="#3a3f47"/><path d="M2044 1144.6 H2053 Q2053 1149.9 2048.5 1149.9 Q2044 1149.9 2044 1144.6 Z" fill="#3a3f47"/></svg>
<div class="t " style="left:1596.25px;top:1199.48px;font-size:20.4px;color:#7a7a7a;font-weight:400;font-style:italic;">Use @mention to tag a user or a team.</div>
<div class="t " style="left:1596.25px;top:1228.23px;font-size:20.4px;color:#7a7a7a;font-weight:400;font-style:italic;">Use #mention to tag a data asset.</div>
<div class="a" style="left:2416.50px;top:1363.00px;width:183.00px;height:49.50px;background:#fff;border:2px solid #3f87ec;border-radius:11px;box-sizing:border-box;"></div>
<div class="t " style="left:2442.75px;top:1376.37px;font-size:22.6px;color:#1570ef;font-weight:400;-webkit-text-stroke:0.3px #1570ef;">Reassign</div>
<svg class="a" style="left:2554.00px;top:1376.50px" width="27.00" height="23.75" viewBox="2554.00 1376.50 27.00 23.75" fill="none"><path d="M2560.95 1383.45 L2567.50 1393.30 L2574.05 1383.45" stroke="#1570ef" stroke-width="1.9" stroke-linecap="round" stroke-linejoin="round"/></svg>
<div class="a" style="left:2625.00px;top:1356.75px;width:151.00px;height:62.50px;background:#b2daf9;border-radius:12px;"></div>
<div class="t " style="left:2651.00px;top:1376.20px;font-size:22.8px;color:#ffffff;font-weight:400;-webkit-text-stroke:0.3px #fff;">Comment</div>
<div class="a" style="left:0.00px;top:1330.00px;width:2943.00px;height:94.00px;background:linear-gradient(to bottom, rgba(0,0,0,0) 0%, rgba(0,0,0,0.006) 25%, rgba(0,0,0,0.02) 50%, rgba(0,0,0,0.045) 75%, rgba(0,0,0,0.085) 100%);"></div>
<div class="a" style="left:2862.00px;top:1313.20px;width:77.00px;height:77.50px;border-radius:50%;box-shadow:0 0 7px 3px rgba(70,130,235,0.32);"></div>
<div class="a" style="left:2862.00px;top:1313.20px;width:77.00px;height:77.50px;background:#0c4fc7;border:3.6px solid #fff;border-radius:50%;box-sizing:border-box;"></div>
<svg class="a" style="left:2870.00px;top:1322.00px" width="62.00" height="60.00" viewBox="2870.00 1322.00 62.00 60.00" fill="none"><circle cx="2900.6" cy="1332.6" r="2.3" fill="#fff"/><path d="M2900.6 1333 V1342" stroke="#fff" stroke-width="1.8"/><rect x="2878.5" y="1341" width="44.5" height="28.8" rx="9" fill="#fff"/><rect x="2876.5" y="1350.5" width="4" height="9" rx="2" fill="#fff"/><rect x="2921" y="1350.5" width="4" height="9" rx="2" fill="#fff"/><rect x="2886.1" y="1347.8" width="29.7" height="15.2" rx="4.5" fill="#c9e2fb"/><circle cx="2893.7" cy="1355.4" r="1.9" fill="#0c4fc7"/><circle cx="2907.8" cy="1355.4" r="1.9" fill="#0c4fc7"/><path d="M2902.4 1369 L2903.6 1374.4 L2909.6 1369 Z" fill="#fff"/></svg>
</body></html>
